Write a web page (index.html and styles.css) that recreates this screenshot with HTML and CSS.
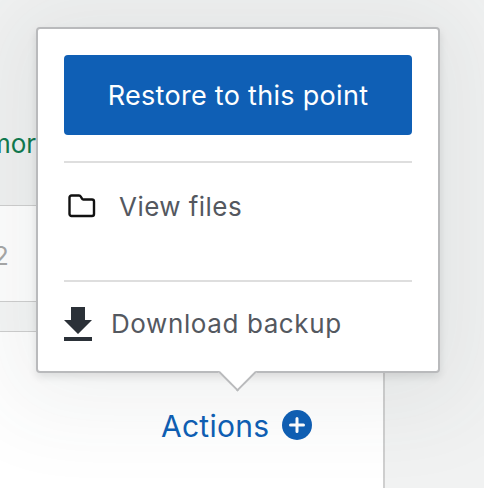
FILE: index.html
```html
<!DOCTYPE html>
<html lang="en">
<head>
<meta charset="utf-8">
<title>Backup actions</title>
<link rel="stylesheet" href="styles.css">
</head>
<body>
<main class="page">
  <section class="table">
    <div class="intro"><a class="more">more</a></div>
    <div class="row row-value"><span class="value">2</span></div>
    <div class="row row-band"></div>
    <div class="row row-actions">
      <a class="actions">Actions
        <svg class="plus" viewBox="0 0 30 30" width="30" height="30" aria-hidden="true">
          <circle cx="15" cy="15" r="15" fill="#0f5fb5"/>
          <path d="M15 8.5v13M8.5 15h13" stroke="#fff" stroke-width="3" stroke-linecap="round" fill="none"/>
        </svg>
      </a>
    </div>
  </section>
  <div class="popover">
    <button class="restore">Restore to this point</button>
    <div class="item item-files">
      <svg class="folder" viewBox="0 0 28 24" width="28" height="24" aria-hidden="true">
        <path d="M3.500 1.500h7.500a2 2 0 0 1 1.700 1l1.300 2.200a1.500 1.500 0 0 0 1.300.8h8.700a2 2 0 0 1 2 2v12.500a2 2 0 0 1-2 2h-20.500a2 2 0 0 1-2-2v-16.500a2 2 0 0 1 2-2z" fill="none" stroke="#111" stroke-width="2.400" stroke-linejoin="round"/>
      </svg>
      <span>View files</span>
    </div>
    <div class="item item-download">
      <svg class="download" viewBox="0 0 28 34" width="28" height="34" aria-hidden="true">
        <path d="M7 0h14v13h7L14 27 0 13h7z" fill="#2b3138"/>
        <rect x="0" y="30" width="28" height="4" fill="#2b3138"/>
      </svg>
      <span>Download backup</span>
    </div>
    <span class="arrow"></span>
  </div>
</main>
</body>
</html>
```
FILE: styles.css
```css
* { box-sizing: border-box; }
html, body { margin: 0; padding: 0; }
body {
  width: 484px;
  height: 488px;
  overflow: hidden;
  font-family: Inter, "Liberation Sans", sans-serif;
  background: #f1f2f2;
}
.page {
  position: relative;
  width: 484px;
  height: 488px;
  overflow: hidden;
}
.table {
  width: 385px;
  height: 488px;
  display: flex;
  flex-direction: column;
}
.intro {
  height: 205px;
  padding-top: 127px;
}
.more {
  display: block;
  margin-left: -12px;
  font-size: 26px;
  line-height: 34px;
  color: #0f7a4f;
}
.row {
  border-top: 1px solid #cfcfcf;
  border-right: 2px solid #cfcfcf;
  background: #fff;
}
.row-value {
  height: 96px;
  padding-top: 33px;
}
.value {
  display: block;
  margin-left: -7px;
  font-size: 26px;
  line-height: 34px;
  color: #a8a8a8;
}
.row-band {
  height: 30px;
  background: #f5f6f6;
}
.row-actions {
  flex: 1;
  padding: 77px 0 0 161px;
}
.actions {
  display: flex;
  align-items: center;
  gap: 13px;
  font-size: 30px;
  letter-spacing: .25px;
  line-height: 34px;
  color: #0f5fb5;
}
.plus { margin-bottom: 2px; }
.popover {
  position: absolute;
  left: 36px;
  top: 27px;
  width: 404px;
  height: 346px;
  padding: 26px 26px 0;
  background: #fff;
  border: 2px solid #b9babc;
  border-radius: 4px;
  box-shadow: 0 4px 8px rgba(0, 0, 0, .1), 0 6px 90px 30px rgba(60, 70, 70, .07);
}
.restore {
  display: block;
  width: 348px;
  height: 80px;
  padding: 2px 0 0;
  border: 0;
  border-radius: 4px;
  background: #0f5fb5;
  color: #fff;
  font: 27px/34px Inter, "Liberation Sans", sans-serif;
  letter-spacing: .3px;
}
.item {
  display: flex;
  border-top: 2px solid #dedede;
  color: #54585f;
  font-size: 26px;
  letter-spacing: .45px;
  line-height: 34px;
}
.item-files {
  height: 119px;
  margin-top: 26px;
  padding: 27px 0 0 4px;
  gap: 23px;
}
.item-files .folder { margin-top: 4px; }
.item-download {
  padding-top: 25px;
  gap: 19px;
  letter-spacing: .6px;
}
.arrow {
  position: absolute;
  left: 186px;
  top: 330px;
  width: 27px;
  height: 27px;
  background: #fff;
  border-right: 2px solid #b9babc;
  border-bottom: 2px solid #b9babc;
  transform: rotate(45deg);
}
```
